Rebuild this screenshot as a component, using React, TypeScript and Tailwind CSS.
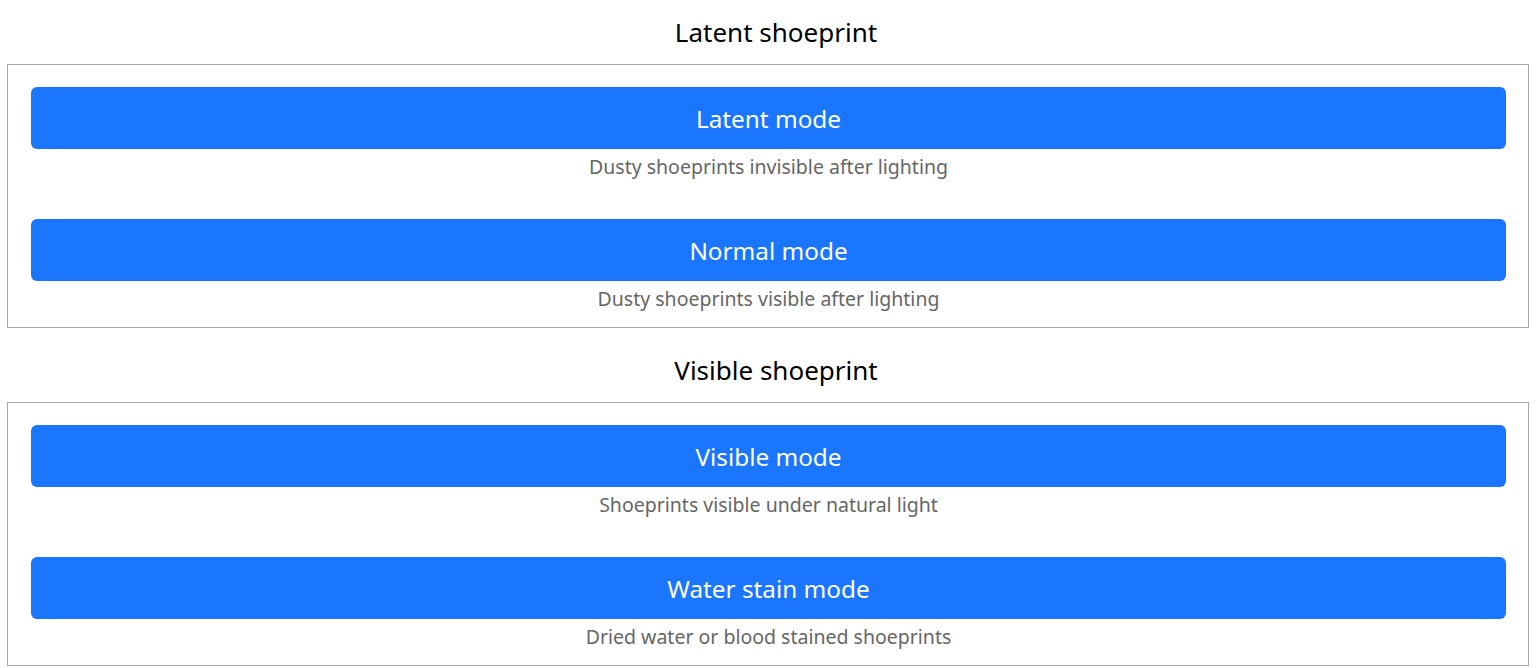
const groups = [
  {
    title: 'Latent shoeprint',
    modes: [
      { label: 'Latent mode', hint: 'Dusty shoeprints invisible after lighting' },
      { label: 'Normal mode', hint: 'Dusty shoeprints visible after lighting' },
    ],
  },
  {
    title: 'Visible shoeprint',
    modes: [
      { label: 'Visible mode', hint: 'Shoeprints visible under natural light' },
      { label: 'Water stain mode', hint: 'Dried water or blood stained shoeprints' },
    ],
  },
]

export default function App() {
  return (
    <div
      className="min-h-screen bg-white pl-[7px] pr-[9px]"
      style={{ fontFamily: '"Noto Sans", Inter, sans-serif' }}
    >
      {groups.map((g, gi) => (
        <div key={gi} className={gi === 0 ? 'mb-[10px]' : ''}>
          <h2 className="h-[64px] pl-[16px] flex items-center justify-center text-[26px] font-normal text-black">
            {g.title}
          </h2>
          <div className="border border-[#a8a8a8] pl-[23px] pr-[22px] pt-[22px] pb-[10px] flex flex-col gap-[34px]">
            {g.modes.map((m, mi) => (
              <div key={mi} className="flex flex-col">
                <button className="h-[62px] pt-[2px] w-full rounded-[6px] bg-[#1a75ff] text-white text-[24.3px] flex items-center justify-center">
                  {m.label}
                </button>
                <p className="h-[36px] flex items-center justify-center text-[19.5px] text-[#666666]">
                  {m.hint}
                </p>
              </div>
            ))}
          </div>
        </div>
      ))}
    </div>
  )
}
